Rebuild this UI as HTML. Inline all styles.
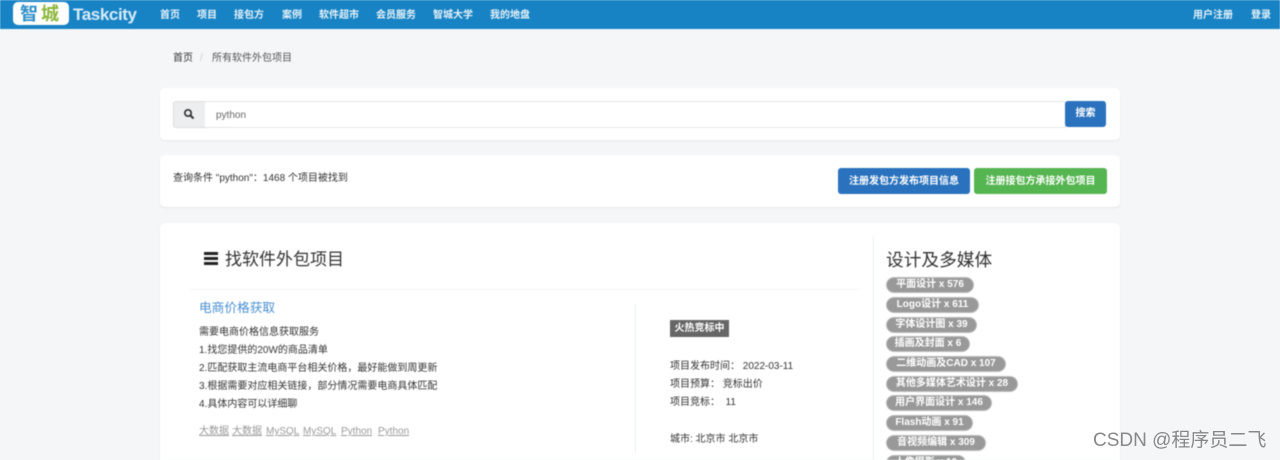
<!DOCTYPE html>
<html lang="zh"><head><meta charset="utf-8"><title>Taskcity</title>
<style>
html,body{margin:0;padding:0}
body{width:1280px;height:460px;overflow:hidden;position:relative;background:#f4f6f8;font-family:"Liberation Sans","Noto Sans CJK SC",sans-serif;color:#333}
.a{position:absolute;white-space:nowrap}
#wrap{position:absolute;left:0;top:0;width:1280px;height:460px;overflow:hidden;filter:blur(.5px)}
.card{position:absolute;background:#fff;border-radius:5px;box-shadow:0 1px 2px rgba(0,0,0,.06)}
.nav{top:9px;font-size:10px;line-height:13px;color:#e6f2fa;font-weight:bold}
.t{font-size:10px;line-height:14px;color:#333}
.tag{font-size:10px;line-height:14px;color:#999;text-decoration:underline}
.b{left:887px;height:14px;border-radius:8px;background:#999;color:#fff;font-size:10px;line-height:14px;font-weight:bold;text-align:center;box-shadow:0 0 0 1px #bbb}
.btn{border-radius:3px;color:#fff;font-size:10px;text-align:center;height:26px;line-height:26px}
</style></head><body>
<div id="wrap">
<div class="a" style="left:0;top:0;width:1280px;height:29px;background:#1783c4"></div>
<div class="a" style="left:13px;top:2px;width:56px;height:23px;border-radius:5px;background:#fff"></div>
<div class="a" style="left:20px;top:4px;font-size:18px;line-height:20px;color:#2f8fc9;font-weight:bold">智</div>
<div class="a" style="left:41px;top:4px;font-size:18px;line-height:20px;color:#8cb63c;font-weight:bold">城</div>
<div class="a" style="left:73px;top:2px;font-size:17px;line-height:26px;color:#d8ecf8;font-weight:bold;letter-spacing:-.4px">Taskcity</div>
<div class="a nav" style="left:160px">首页</div>
<div class="a nav" style="left:197px">项目</div>
<div class="a nav" style="left:234px">接包方</div>
<div class="a nav" style="left:282px">案例</div>
<div class="a nav" style="left:319px">软件超市</div>
<div class="a nav" style="left:376px">会员服务</div>
<div class="a nav" style="left:433px">智城大学</div>
<div class="a nav" style="left:490px">我的地盘</div>
<div class="a nav" style="left:1193px">用户注册</div>
<div class="a nav" style="left:1251px">登录</div>

<div class="a t" style="left:173px;top:52px">首页</div>
<div class="a t" style="left:200px;top:52px;color:#ccc">/</div>
<div class="a t" style="left:212px;top:52px;color:#555">所有软件外包项目</div>

<div class="card" style="left:160px;top:88px;width:960px;height:52px"></div>
<div class="a" style="left:173px;top:101px;width:31px;height:25px;background:#eceef0;border:1px solid #ddd;border-radius:3px 0 0 3px"></div>
<svg class="a" style="left:183px;top:108px" width="12" height="12" viewBox="0 0 12 12"><circle cx="5" cy="5" r="3.2" fill="none" stroke="#333" stroke-width="1.7"/><path d="M7.5 7.5L10.5 10.5" stroke="#333" stroke-width="2"/></svg>
<div class="a" style="left:205px;top:101px;width:860px;height:25px;background:#fff;border:1px solid #e4e6e8;border-left:0;box-sizing:content-box"></div>
<div class="a t" style="left:216px;top:107px;color:#666;line-height:14px;padding-top:2px">python</div>
<div class="a btn" style="left:1065px;top:101px;width:41px;height:26px;background:#2a72bd;font-weight:bold">搜索</div>

<div class="card" style="left:160px;top:155px;width:960px;height:52px"></div>
<div class="a t" style="left:173px;top:172px">查询条件 "python"：1468 个项目被找到</div>
<div class="a btn" style="left:838px;top:168px;width:132px;background:#2a72bd;font-weight:bold;line-height:27px">注册发包方发布项目信息</div>
<div class="a btn" style="left:974px;top:168px;width:133px;background:#55b550;font-weight:bold;line-height:27px">注册接包方承接外包项目</div>

<div class="card" style="left:160px;top:223px;width:960px;height:240px"></div>
<div class="a" style="left:204px;top:252px;width:14px;height:2.5px;background:#222;box-shadow:0 5px 0 #222,0 10px 0 #222"></div>
<div class="a" style="left:225px;top:250px;font-size:17px;line-height:20px;color:#333">找软件外包项目</div>
<div class="a" style="left:190px;top:289px;width:670px;height:1px;background:#f3f4f6"></div>
<div class="a" style="left:199px;top:300px;font-size:12.7px;line-height:16px;color:#4a90d0">电商价格获取</div>
<div class="a t" style="left:199px;top:326px">需要电商价格信息获取服务</div>
<div class="a t" style="left:199px;top:344px">1.找您提供的20W的商品清单</div>
<div class="a t" style="left:199px;top:362px">2.匹配获取主流电商平台相关价格，最好能做到周更新</div>
<div class="a t" style="left:199px;top:380px">3.根据需要对应相关链接，部分情况需要电商具体匹配</div>
<div class="a t" style="left:199px;top:398px">4.具体内容可以详细聊</div>
<div class="a tag" style="left:199px;top:425px">大数据</div>
<div class="a tag" style="left:232px;top:425px">大数据</div>
<div class="a tag" style="left:266px;top:425px">MySQL</div>
<div class="a tag" style="left:303px;top:425px">MySQL</div>
<div class="a tag" style="left:341px;top:425px">Python</div>
<div class="a tag" style="left:378px;top:425px">Python</div>

<div class="a" style="left:635px;top:304px;width:1px;height:150px;background:#eceef0"></div>
<div class="a" style="left:670px;top:320px;width:59px;height:17px;background:#666;color:#fff;font-size:10px;line-height:17px;text-align:center;font-weight:bold">火热竞标中</div>
<div class="a t" style="left:670px;top:360px">项目发布时间： 2022-03-11</div>
<div class="a t" style="left:670px;top:378px">项目预算： 竞标出价</div>
<div class="a t" style="left:670px;top:396px">项目竞标： &nbsp;11</div>
<div class="a t" style="left:670px;top:433px">城市: 北京市 北京市</div>

<div class="a" style="left:873px;top:237px;width:1px;height:223px;background:#eceef0"></div>
<div class="a" style="left:886px;top:250px;font-size:17.7px;line-height:20px;color:#333">设计及多媒体</div>
<div class="a b" style="top:278px;width:86px">平面设计 x 576</div>
<div class="a b" style="top:298px;width:91px">Logo设计 x 611</div>
<div class="a b" style="top:318px;width:89px">字体设计图 x 39</div>
<div class="a b" style="top:337px;width:82px">插画及封面 x 6</div>
<div class="a b" style="top:357px;width:118px">二维动画及CAD x 107</div>
<div class="a b" style="top:377px;width:130px">其他多媒体艺术设计 x 28</div>
<div class="a b" style="top:396px;width:104px">用户界面设计 x 146</div>
<div class="a b" style="top:416px;width:85px">Flash动画 x 91</div>
<div class="a b" style="top:436px;width:98px">音视频编辑 x 309</div>
<div class="a b" style="top:456px;width:78px">人像摄影 x 10</div>
</div>
<div class="a" style="left:1093px;top:430px;font-size:19px;line-height:22px;color:#888">CSDN @程序员二飞</div>
</body></html>
